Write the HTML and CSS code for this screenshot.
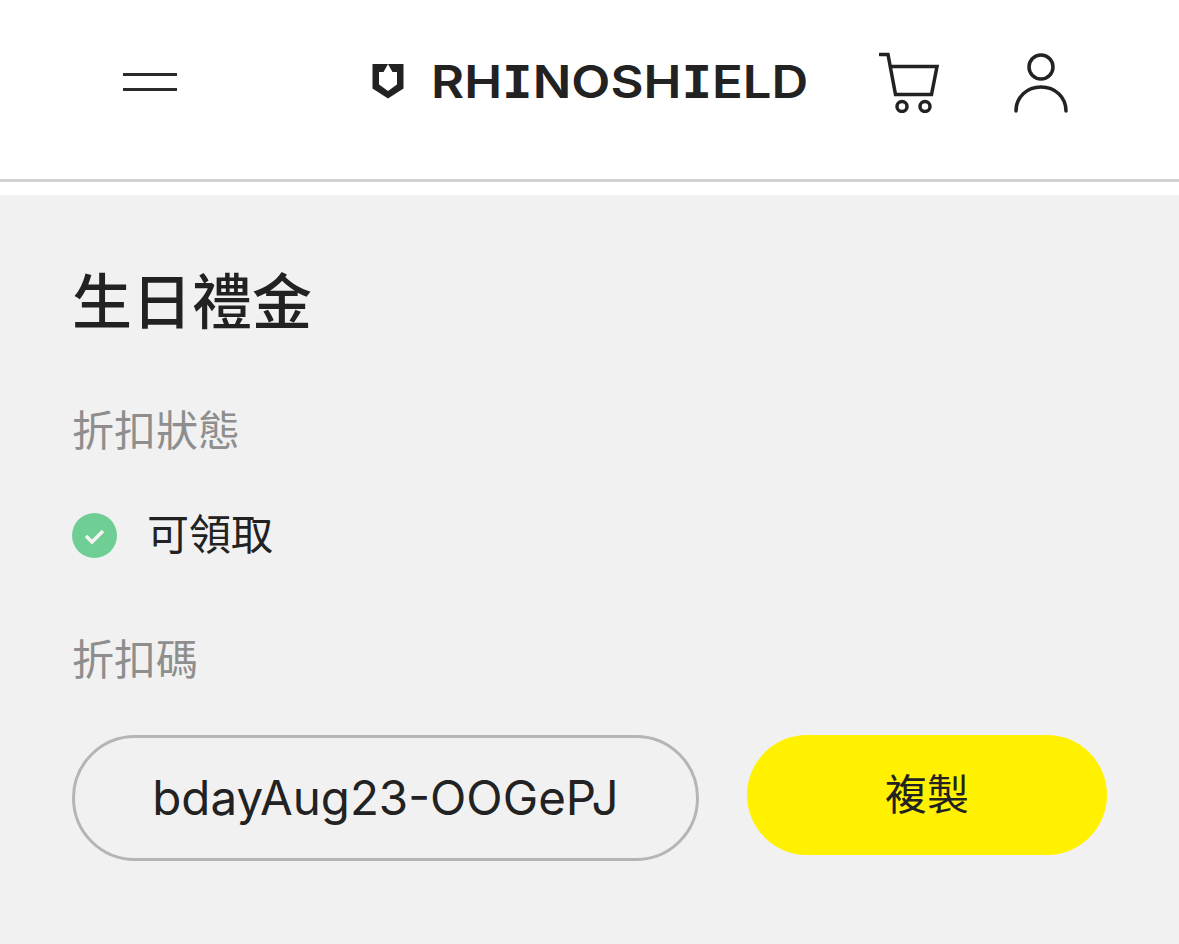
FILE: index.html
```html
<!DOCTYPE html>
<html lang="zh-Hant">
<head>
    <meta charset="UTF-8">
    <meta name="viewport" content="width=device-width, initial-scale=1.0">
    <title>生日禮金 | RHINOSHIELD</title>
    <link rel="stylesheet" href="styles.css">
</head>
<body>
    <header class="site-header">
        <button class="menu-btn" aria-label="選單">
            <span></span>
            <span></span>
        </button>
        <div class="logo">
            <svg class="logo-mark" width="32" height="35" viewBox="0 0 32 35">
                <path d="M0.500 0H31.500V24.500L16 34.500 0.500 24.500Z" fill="#222"/>
                <path d="M7 8H11.500L13.500 4.500 16 0 18.500 4.500 20.500 8H25V20.500L16 27 7 20.500Z" fill="#fff"/>
            </svg>
            <span class="logo-text">RH<span class="logo-i">I</span>NOSH<span class="logo-i">I</span>ELD</span>
        </div>
        <svg class="cart-icon" width="60" height="62" viewBox="0 0 60 62" fill="none" stroke="#222" stroke-width="3.500">
            <path d="M1 3.500H9L16.500 43.500H52.500L58 15.500H11.500" stroke-linecap="round"/>
            <circle cx="23" cy="55.500" r="5"/>
            <circle cx="46" cy="55.500" r="5"/>
        </svg>
        <svg class="user-icon" width="54" height="62" viewBox="0 0 54 62" fill="none" stroke="#222" stroke-width="3.500">
            <circle cx="27" cy="16" r="12"/>
            <path d="M2 60C2 46 13 36 27 36S52 46 52 60" stroke-linecap="round"/>
        </svg>
    </header>

    <main class="coupon">
        <h1 class="coupon-title">生日禮金</h1>

        <div class="field-label">折扣狀態</div>
        <div class="status">
            <svg class="status-icon" width="45" height="45" viewBox="0 0 45 45">
                <circle cx="22.500" cy="22.500" r="22.500" fill="#6fce94"/>
                <path d="M14 23L20 29 31 18" fill="none" stroke="#f4f4f4" stroke-width="3.500"/>
            </svg>
            <span class="status-text">可領取</span>
        </div>

        <div class="field-label">折扣碼</div>
        <div class="code-row">
            <div class="code-box">bdayAug23-OOGePJ</div>
            <button class="copy-btn">複製</button>
        </div>
    </main>
</body>
</html>
```

FILE: styles.css
```css
* {
    margin: 0;
    padding: 0;
    box-sizing: border-box;
}

body {
    background: #fff;
    color: #222;
    font-family: 'Inter', 'Noto Sans CJK TC', sans-serif;
    overflow: hidden;
}

.site-header {
    display: flex;
    align-items: center;
    height: 182px;
    padding: 0 111px 16px 123px;
    border-bottom: 3px solid #d2d2d2;
}

.menu-btn {
    display: flex;
    flex-direction: column;
    gap: 12px;
    width: 54px;
    border: none;
    background: none;
}

.menu-btn span {
    display: block;
    height: 3px;
    background: #2a2a2a;
}

.logo {
    display: flex;
    align-items: center;
    gap: 27px;
    margin-left: 195px;
}

.logo-mark {
    display: block;
}

/* the wordmark is wider than Inter, so it gets stretched */
.logo-text {
    display: inline-block;
    font-size: 45px;
    font-weight: 600;
    line-height: 1;
    white-space: nowrap;
    transform: scaleX(1.13);
    transform-origin: left center;
}

.logo-i {
    font-family: 'DejaVu Sans Mono', monospace;
    font-weight: 700;
}

.cart-icon {
    margin-left: auto;
}

.user-icon {
    margin-left: 75px;
}

.coupon {
    height: 749px;
    margin-top: 13px;
    padding: 69px 72px 0;
    background: #f1f1f1;
}

.coupon-title {
    font-size: 60px;
    font-weight: 500;
    line-height: 76px;
}

.field-label {
    font-size: 42px;
    line-height: 56px;
    color: #8e8e8e;
    margin-top: 63px;
}

.status {
    display: flex;
    align-items: center;
    gap: 30px;
    height: 56px;
    margin-top: 46px;
    font-size: 42px;
}

.status-icon {
    flex-shrink: 0;
    margin-top: 4px;
}

.status-text {
    padding-bottom: 4px;
}

.status + .field-label {
    margin-top: 71px;
}

.code-row {
    display: flex;
    align-items: flex-start;
    gap: 48px;
    margin-top: 47px;
}

.code-box {
    width: 627px;
    height: 126px;
    border: 3px solid #b5b5b5;
    border-radius: 63px;
    font-size: 47.5px;
    line-height: 120px;
    text-align: center;
    white-space: nowrap;
}

.copy-btn {
    width: 360px;
    height: 120px;
    padding-bottom: 8px;
    border: none;
    border-radius: 60px;
    background: #fff100;
    color: #222;
    font-family: inherit;
    font-size: 42px;
}
```
